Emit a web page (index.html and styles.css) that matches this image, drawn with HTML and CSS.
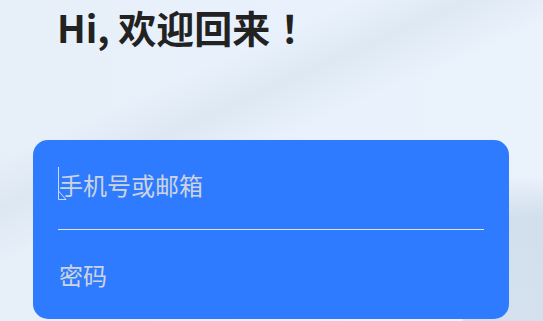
FILE: index.html
```html
<!DOCTYPE html>
<html lang="zh-CN">
<head>
<meta charset="utf-8">
<title>登录</title>
<link rel="stylesheet" href="styles.css">
</head>
<body>
<main class="page">
  <h1 class="title">Hi, 欢迎回来<span class="bang">！</span></h1>
  <form class="card">
    <div class="field">
      <span class="caret" aria-hidden="true">
        <svg width="10" height="34" viewBox="0 0 10 34"><path d="M0.5 0 V32.5 H8 L0.5 24" fill="none" stroke="#c9dcff" stroke-width="1"/></svg>
      </span>
      <span class="placeholder">手机号或邮箱</span>
    </div>
    <div class="divider"></div>
    <div class="field">
      <span class="placeholder">密码</span>
    </div>
  </form>
</main>
</body>
</html>
```
FILE: styles.css
```css
html, body {
  margin: 0;
  padding: 0;
  height: 100%;
}
body {
  font-family: "Noto Sans CJK SC", "Noto Sans", sans-serif;
  background-color: #e8f0fa;
  background-image:
    linear-gradient(180deg, rgba(232,241,251,0) 0%, rgba(232,241,251,0) 55%, rgba(205,219,233,0.85) 68%, rgba(210,223,236,0.9) 100%),
    linear-gradient(156deg, rgba(255,255,255,0) 28%, rgba(214,226,238,0.6) 37%, rgba(255,255,255,0) 47%),
    linear-gradient(90deg, #e7eff9 0%, #e9f2fc 60%, #eaf2fc 100%);
  background-size: 80px 100%, 100% 100%, 100% 100%;
  background-position: right top, 0 0, 0 0;
  background-repeat: no-repeat;
  overflow: hidden;
}
.page {
  display: flex;
  flex-direction: column;
  padding: 0 34px 0 33px;
}
.title {
  margin: 5px 0 0 24px;
  font-size: 38px;
  line-height: 44px;
  font-weight: 700;
  color: #222;
  letter-spacing: 0;
}
.bang {
  padding-left: 10px;
}
.card {
  margin-top: 91px;
  height: 179px;
  box-sizing: border-box;
  background: #2f7bff;
  border-radius: 15px;
  padding: 0 25px;
  display: flex;
  flex-direction: column;
}
.field {
  flex: 1;
  display: flex;
  align-items: center;
  position: relative;
}
.placeholder {
  font-size: 24px;
  line-height: 30px;
  color: #cdd4df;
  padding-left: 1px;
}
.caret {
  position: absolute;
  left: 0;
  top: 27px;
  display: block;
  line-height: 0;
}
.divider {
  height: 1px;
  background: #dfe4ee;
}
```
